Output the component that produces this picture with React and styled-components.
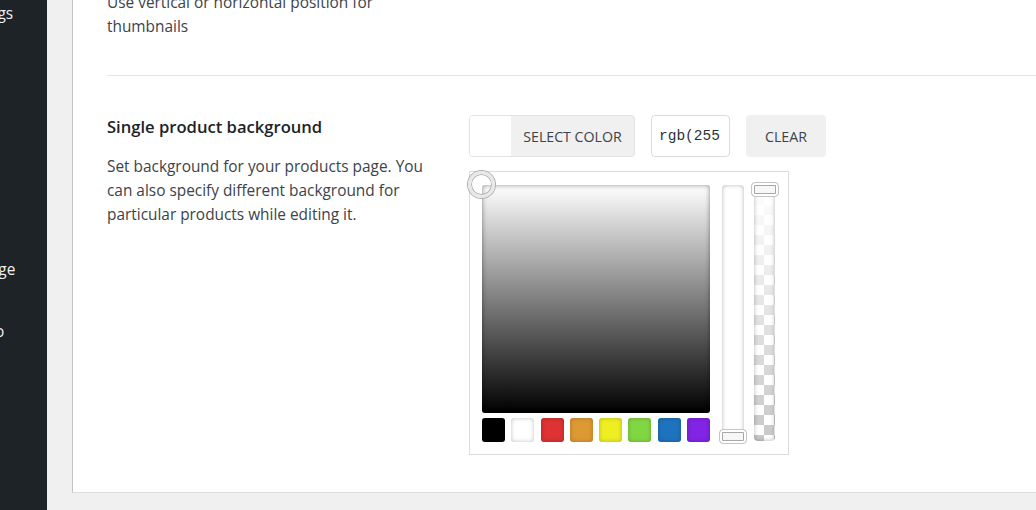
import React from 'react';
import styled, { createGlobalStyle } from 'styled-components';

const GlobalStyle = createGlobalStyle`
    html, body {
        margin: 0;
        padding: 0;
        background: #f0f0f1;
        font-family: "Open Sans", "Noto Sans", sans-serif;
    }
    * {
        box-sizing: border-box;
    }
`;

const swatches = ['#000000', '#ffffff', '#dd3333', '#dd9933', '#eeee22', '#81d742', '#1e73be', '#8224e3'];

const menu = [
    { label: 'Settings', shift: -44, gap: 4 },
    { label: 'Language', shift: -54, gap: 236 },
    { label: 'Info', shift: -24, gap: 42 },
];

export default function App() {
    return (
        <>
            <GlobalStyle />
            <Page>
                <Sidebar>
                    {menu.map((item) => (
                        <MenuItem key={item.label} $gap={item.gap}>
                            <MenuLabel $shift={item.shift}>{item.label}</MenuLabel>
                        </MenuItem>
                    ))}
                </Sidebar>
                <Main>
                    <Card>
                        {/* PREVIOUS OPTION (scrolled) */}
                        <TopNote>
                            Use vertical or horizontal position for
                            <br />
                            thumbnails
                        </TopNote>
                        <Divider />

                        {/* SINGLE PRODUCT BACKGROUND */}
                        <Row>
                            <LabelCol>
                                <Heading>Single product background</Heading>
                                <Desc>
                                    Set background for your products page. You
                                    <br />
                                    can also specify different background for
                                    <br />
                                    particular products while editing it.
                                </Desc>
                            </LabelCol>
                            <ControlCol>
                                <ButtonRow>
                                    <ColorButton type="button">
                                        <Swatch />
                                        <ButtonText>Select Color</ButtonText>
                                    </ColorButton>
                                    <ColorInput type="text" readOnly value="rgb(255, 255, 255)" />
                                    <ClearButton type="button">Clear</ClearButton>
                                </ButtonRow>

                                <Picker>
                                    <SquareCol>
                                        <Square>
                                            <SquareHandle />
                                        </Square>
                                        <Palette>
                                            {swatches.map((c) => (
                                                <PaletteItem key={c} $color={c} />
                                            ))}
                                        </Palette>
                                    </SquareCol>
                                    <Strip>
                                        <StripHandle $bottom />
                                    </Strip>
                                    <AlphaStrip>
                                        <StripHandle />
                                    </AlphaStrip>
                                </Picker>
                            </ControlCol>
                        </Row>
                    </Card>
                </Main>
            </Page>
        </>
    );
}

const Page = styled.div`
    display: flex;
    height: 510px;
    overflow: hidden;
`;

const Sidebar = styled.div`
    width: 47px;
    flex-shrink: 0;
    background: #1d2327;
    overflow: hidden;
    display: flex;
    flex-direction: column;
`;

const MenuItem = styled.div`
    margin-top: ${(p) => p.$gap}px;
    height: 20px;
    line-height: 20px;
    white-space: nowrap;
`;

const MenuLabel = styled.span`
    display: block;
    margin-left: ${(p) => p.$shift}px;
    color: #f0f0f1;
    font-size: 15.4px;
`;

const Main = styled.div`
    flex: 1;
    padding-left: 25px;
    background: #f0f0f1;
`;

const Card = styled.div`
    height: 492px;
    box-sizing: content-box;
    background: #fff;
    border-left: 1px solid #c3c4c7;
    border-bottom: 1px solid #dcdcde;
    padding-left: 34px;
    overflow: hidden;
`;

const TopNote = styled.p`
    margin: -9px 0 0;
    padding-bottom: 36px;
    font-size: 15.4px;
    line-height: 24px;
    color: #3c434a;
`;

const Divider = styled.hr`
    margin: 0;
    border: none;
    border-top: 1px solid #e2e4e7;
`;

const Row = styled.div`
    display: flex;
    padding-top: 39px;
`;

const LabelCol = styled.div`
    width: 362px;
    flex-shrink: 0;
`;

const Heading = styled.h3`
    margin: 0 0 16px;
    font-size: 16.6px;
    font-weight: 600;
    line-height: 24px;
    color: #1d2327;
`;

const Desc = styled.p`
    margin: 0;
    font-size: 15.4px;
    line-height: 24px;
    color: #3c434a;
`;

const ControlCol = styled.div`
    display: flex;
    flex-direction: column;
`;

const ButtonRow = styled.div`
    display: flex;
    gap: 16px;
    height: 42px;
`;

const ColorButton = styled.button`
    display: flex;
    padding: 0;
    width: 166px;
    height: 42px;
    border: 1px solid #e2e2e2;
    border-radius: 4px;
    overflow: hidden;
    background: #f0f0f0;
    cursor: pointer;
`;

const Swatch = styled.span`
    width: 41px;
    height: 100%;
    background: #fff;
`;

const ButtonText = styled.span`
    flex: 1;
    display: flex;
    align-items: center;
    justify-content: center;
    font-family: "Open Sans", "Noto Sans", sans-serif;
    font-size: 14.2px;
    text-transform: uppercase;
    color: #3c434a;
`;

const ColorInput = styled.input`
    width: 79px;
    height: 42px;
    padding: 0 8px 0 7px;
    border: 1px solid #dcdcde;
    border-radius: 4px;
    font-family: "Liberation Mono", monospace;
    font-size: 14.5px;
    color: #2c3338;
    outline: none;
`;

const ClearButton = styled.button`
    width: 80px;
    height: 42px;
    border: none;
    border-radius: 4px;
    background: #f0f0f0;
    font-family: "Open Sans", "Noto Sans", sans-serif;
    font-size: 14.2px;
    text-transform: uppercase;
    color: #3c434a;
    cursor: pointer;
`;

const Picker = styled.div`
    margin-top: 14px;
    width: 320px;
    height: 284px;
    border: 1px solid #dcdcde;
    padding: 13px 0 0 12px;
    display: flex;
    align-items: flex-start;
`;

const SquareCol = styled.div`
    display: flex;
    flex-direction: column;
    gap: 5px;
    width: 228px;
`;

const Square = styled.div`
    position: relative;
    width: 228px;
    height: 228px;
    border-radius: 3px;
    background: linear-gradient(to bottom, #fff, #000);
    box-shadow: inset 0 0 5px rgba(0, 0, 0, 0.45);
`;

const SquareHandle = styled.span`
    position: absolute;
    left: -14px;
    top: -14px;
    width: 27px;
    height: 27px;
    border-radius: 50%;
    border: 3px solid #e8e8e8;
    box-shadow: 0 0 0 1px #b0b0b0, inset 0 0 0 1px #b0b0b0;
`;

const Palette = styled.div`
    display: flex;
    justify-content: space-between;
`;

const PaletteItem = styled.span`
    width: 23px;
    height: 24px;
    border-radius: 3px;
    background: ${(p) => p.$color};
    box-shadow: inset 0 0 4px rgba(0, 0, 0, 0.25);
`;

const Strip = styled.div`
    position: relative;
    margin-left: 12px;
    width: 22px;
    height: 256px;
    border-radius: 4px;
    background: #fff;
    box-shadow: inset 0 0 4px rgba(0, 0, 0, 0.3);
`;

const AlphaStrip = styled(Strip)`
    margin-left: 10px;
    width: 21px;
    background-color: #fff;
    background-image:
        linear-gradient(to bottom, #fff, rgba(255, 255, 255, 0)),
        linear-gradient(45deg, #c8c8c8 25%, transparent 25%, transparent 75%, #c8c8c8 75%),
        linear-gradient(45deg, #c8c8c8 25%, transparent 25%, transparent 75%, #c8c8c8 75%);
    background-size: 100% 100%, 20px 20px, 20px 20px;
    background-position: 0 0, 0 0, 10px 10px;
`;

const StripHandle = styled.span`
    position: absolute;
    left: -3px;
    ${(p) => (p.$bottom ? 'bottom: -3px;' : 'top: -3px;')}
    width: 28px;
    height: 15px;
    border-radius: 4px;
    border: 1px solid #c4c4c4;
    background: #f7f7f7;
    box-shadow: inset 0 0 0 2px #fff, inset 0 0 0 3px #a8a8a8;
`;
